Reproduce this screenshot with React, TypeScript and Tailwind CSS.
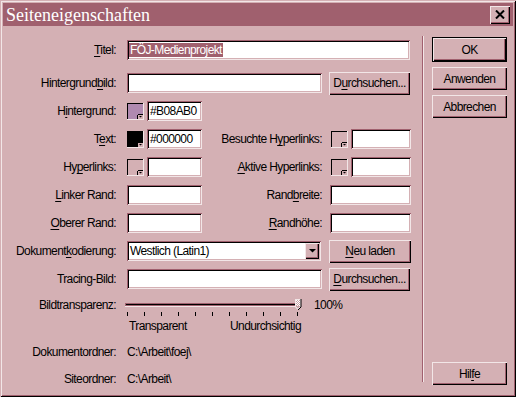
import React from 'react';

// classic win95-style dialog, "rose" colour scheme

const sunken = 'bg-white shadow-[inset_1px_1px_0_#a0606e,inset_-1px_-1px_0_#f2e6e7,inset_2px_2px_0_#000,inset_-2px_-2px_0_#d4b0b4]';
const raised = 'bg-[#d4b0b4] shadow-[inset_1px_1px_0_#f2e6e7,inset_-1px_-1px_0_#000,inset_-2px_-2px_0_#a0606e]';

function U({ children }: { children: React.ReactNode }) {
    return <span className="underline underline-offset-[2px] decoration-1">{children}</span>;
}

function Lbl({ children }: { children: React.ReactNode }) {
    return <div className="w-[124px] shrink-0 pr-[11px] text-right">{children}</div>;
}

function RLbl({ children }: { children: React.ReactNode }) {
    return <div className="w-[120px] shrink-0 text-right">{children}</div>;
}

function Field({ className = '', children }: { className?: string; children?: React.ReactNode }) {
    return <div className={`${sunken} h-[20px] shrink-0 flex items-center px-[3px] ${className}`}>{children}</div>;
}

function Btn({ className = '', children }: { className?: string; children: React.ReactNode }) {
    return <div className={`${raised} h-[23px] shrink-0 flex items-center justify-center ${className}`}>{children}</div>;
}

function Swatch({ color }: { color: string }) {
    return (
        <svg width="17" height="17" viewBox="0 0 17 17" className="shrink-0">
            <rect x="0" y="0" width="17" height="17" fill="#f2e6e7" />
            <rect x="0" y="0" width="16" height="16" fill="#000" />
            <rect x="1" y="1" width="15" height="15" fill={color} />
            <rect x="11" y="12" width="5" height="4" fill="#d4b0b4" />
            <path d="M11 12H10V16H11Z M11 11H16V12H11Z" fill="#000" />
            <path d="M12 13H15L13.5 14.5Z" fill="#000" />
        </svg>
    );
}

function Slider() {
    const ticks = [0, 1, 2, 3, 4, 5, 6, 7, 8, 9, 10];
    return (
        <svg width="180" height="24" viewBox="0 0 180 24" className="shrink-0 -ml-[2px]">
            <rect x="0" y="10" width="176" height="4" fill="#f2e6e7" />
            <rect x="0" y="10" width="175" height="3" fill="#a0606e" />
            <rect x="1" y="11" width="174" height="1" fill="#000" />
            {ticks.map(i => (
                <rect key={i} x={2 + i * 17} y="19" width="1" height="4" fill="#000" />
            ))}
            <path d="M170 6H176V14L173 17L170 14Z" fill="#f2e6e7" />
            <path d="M176 6V14L173 17" stroke="#000" fill="none" strokeWidth="1" />
            <path d="M171 7H175V13.5L173 15.5L171 13.5Z" fill="#c9a2a7" />
            <path d="M171 7h1v1h-1zM173 7h1v1h-1zM172 8h1v1h-1zM174 8h1v1h-1zM171 9h1v1h-1zM173 9h1v1h-1zM172 10h1v1h-1zM174 10h1v1h-1zM171 11h1v1h-1zM173 11h1v1h-1zM172 12h1v1h-1zM174 12h1v1h-1z" fill="#fff" />
        </svg>
    );
}

export default function App() {
    return (
        <div className="w-[516px] h-[397px] bg-[#d4b0b4] p-[3px] text-[12px] tracking-[-0.6px] text-black font-['Liberation_Sans',Arial,sans-serif] leading-none shadow-[inset_1px_1px_0_#d4b0b4,inset_-1px_-1px_0_#000,inset_2px_2px_0_#f2e6e7,inset_-2px_-2px_0_#a0606e]">
            {/* title bar */}
            <div className="h-[23px] bg-[#a0606e] flex items-center justify-between pl-[3px] pr-[3px]">
                <span className="text-white text-[18px] tracking-normal font-['Liberation_Serif',serif] leading-none">Seiteneigenschaften</span>
                <div className={`${raised} w-[20px] h-[18px] flex items-center justify-center`}>
                    <svg width="10" height="9" viewBox="0 0 10 9">
                        <path d="M1 0.5L9 8.5M9 0.5L1 8.5" stroke="#000" strokeWidth="2" />
                    </svg>
                </div>
            </div>

            <div className="flex h-[368px]">
                {/* form */}
                <div className="w-[419px] shrink-0 flex flex-col pt-[10px]">
                    <div className="flex h-[28px] items-center">
                        <Lbl><U>T</U>itel:</Lbl>
                        <Field className="w-[283px]">
                            <span className="bg-[#a0606e] text-white px-px -ml-px py-px">FÖJ-Medienprojekt</span>
                        </Field>
                    </div>
                    <div className="flex h-[28px] items-center mt-[5px]">
                        <Lbl>Hintergrund<U>b</U>ild:</Lbl>
                        <Field className="w-[195px]" />
                        <Btn className="ml-[7px] w-[81px]">D<U>u</U>rchsuchen...</Btn>
                    </div>
                    <div className="flex h-[28px] items-center">
                        <Lbl>H<U>i</U>ntergrund:</Lbl>
                        <Swatch color="#b08ab0" />
                        <Field className="ml-[3px] w-[55px]">#B08AB0</Field>
                    </div>
                    <div className="flex h-[28px] items-center">
                        <Lbl>T<U>e</U>xt:</Lbl>
                        <Swatch color="#000000" />
                        <Field className="ml-[3px] w-[55px]">#000000</Field>
                        <RLbl>Besuchte H<U>y</U>perlinks:</RLbl>
                        <div className="ml-[9px] flex items-center">
                            <Swatch color="#d4b0b4" />
                        </div>
                        <Field className="ml-[3px] w-[60px]" />
                    </div>
                    <div className="flex h-[28px] items-center">
                        <Lbl>Hy<U>p</U>erlinks:</Lbl>
                        <Swatch color="#d4b0b4" />
                        <Field className="ml-[3px] w-[55px]" />
                        <RLbl><U>A</U>ktive Hyperlinks:</RLbl>
                        <div className="ml-[9px] flex items-center">
                            <Swatch color="#d4b0b4" />
                        </div>
                        <Field className="ml-[3px] w-[60px]" />
                    </div>
                    <div className="flex h-[28px] items-center">
                        <Lbl><U>L</U>inker Rand:</Lbl>
                        <Field className="w-[75px]" />
                        <RLbl>Rand<U>b</U>reite:</RLbl>
                        <Field className="ml-[8px] w-[81px]" />
                    </div>
                    <div className="flex h-[28px] items-center">
                        <Lbl><U>O</U>berer Rand:</Lbl>
                        <Field className="w-[75px]" />
                        <RLbl><U>R</U>andhöhe:</RLbl>
                        <Field className="ml-[8px] w-[81px]" />
                    </div>
                    <div className="flex h-[28px] items-center">
                        <Lbl>Dokument<U>k</U>odierung:</Lbl>
                        <Field className="w-[194px] pr-[2px] justify-between">
                            <span>Westlich (Latin1)</span>
                            <div className={`${raised} w-[14px] h-[16px] flex items-center justify-center`}>
                                <svg width="7" height="4" viewBox="0 0 7 4">
                                    <path d="M0 0H7L3.5 3.5Z" fill="#000" />
                                </svg>
                            </div>
                        </Field>
                        <Btn className="ml-[8px] w-[82px]"><U>N</U>eu laden</Btn>
                    </div>
                    <div className="flex h-[28px] items-center">
                        <Lbl>Tracing-Bild:</Lbl>
                        <Field className="w-[195px]" />
                        <Btn className="ml-[7px] w-[81px]"><U>D</U>urchsuchen...</Btn>
                    </div>
                    <div className="flex h-[24px] items-center">
                        <Lbl>Bildtransparenz:</Lbl>
                        <Slider />
                        <span className="ml-[9px]">100%</span>
                    </div>
                    <div className="flex h-[18px] items-center">
                        <div className="w-[126px] shrink-0" />
                        <div className="w-[172px] flex justify-between">
                            <span>Transparent</span>
                            <span>Undurchsichtig</span>
                        </div>
                    </div>
                    <div className="flex h-[27px] items-center mt-[3px]">
                        <Lbl>Dokumentordner:</Lbl>
                        <span>C:\Arbeit\foej\</span>
                    </div>
                    <div className="flex h-[27px] items-center">
                        <Lbl>Siteordner:</Lbl>
                        <span>C:\Arbeit\</span>
                    </div>
                </div>

                {/* separator */}
                <div className="w-[2px] shrink-0 mt-[10px] h-[346px] border-l border-[#a0606e] bg-[#f2e6e7]" />

                {/* buttons */}
                <div className="flex flex-col pl-[8px] pt-[11px] pb-[9px]">
                    <div className="border border-black w-[75px]">
                        <Btn className="w-[73px] h-[22px]">OK</Btn>
                    </div>
                    <Btn className="mt-[5px] w-[75px]">Anwenden</Btn>
                    <Btn className="mt-[5px] w-[75px]">Abbrechen</Btn>
                    <Btn className="mt-auto w-[75px]">Hil<U>f</U>e</Btn>
                </div>
            </div>
        </div>
    );
}
